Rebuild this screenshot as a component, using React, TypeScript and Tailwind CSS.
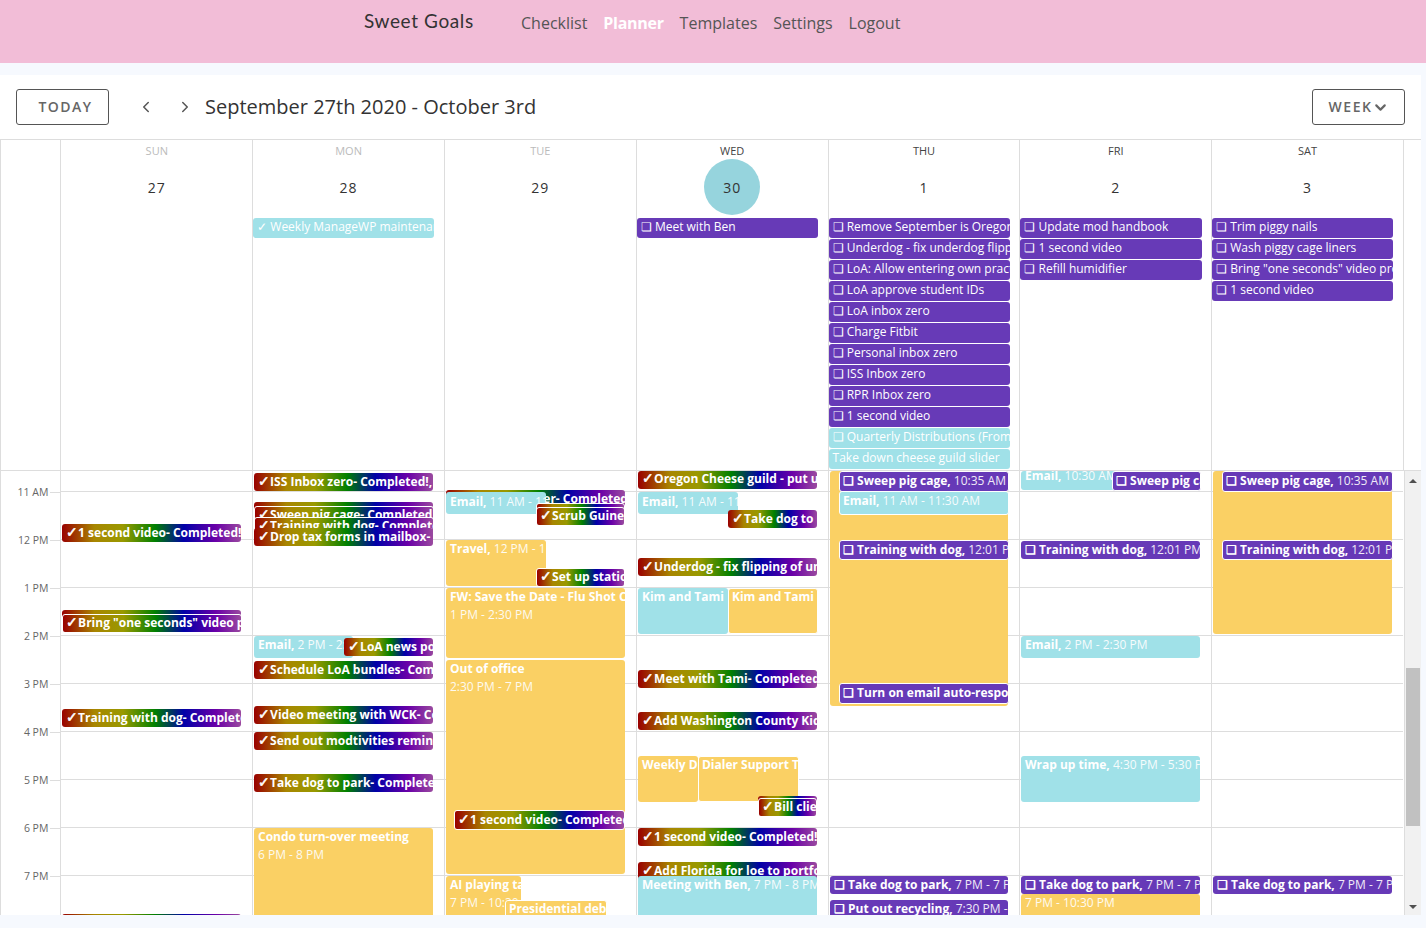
import { ChevronDown, ChevronLeft, ChevronRight } from "lucide-react";

type Kind = "rainbow" | "purple" | "cyan" | "amber";

type CalEvent = {
  day: number;
  x: number;
  y: number;
  w: number;
  h: number;
  kind: Kind;
  title?: string;
  time?: string;
  below?: boolean;
  ring?: boolean;
  lift?: number;
};

const COL_X = 60.4;
const COL_W = 191.8;
const GRID_TOP = 471;

const kindClass: Record<Kind, string> = {
  rainbow:
    "bg-[linear-gradient(to_right,#990000,#a88600_18%,#999900_34%,#008000_52%,#0000a8_68%,#6a00a8_86%,#9a4a9f)]",
  purple: "bg-[#673ab7]",
  cyan: "bg-[#a0e1e8]",
  amber: "bg-[#fad064]",
};

const days = [
  { label: "SUN", date: "27", past: true },
  { label: "MON", date: "28", past: true },
  { label: "TUE", date: "29", past: true },
  { label: "WED", date: "30", today: true },
  { label: "THU", date: "1" },
  { label: "FRI", date: "2" },
  { label: "SAT", date: "3" },
];

const allDay: { text: string; cyan?: boolean }[][] = [
  [],
  [{ text: "✓ Weekly ManageWP maintenance", cyan: true }],
  [],
  [{ text: "❏ Meet with Ben" }],
  [
    { text: "❏ Remove September is Oregon" },
    { text: "❏ Underdog - fix underdog flipping" },
    { text: "❏ LoA: Allow entering own practice" },
    { text: "❏ LoA approve student IDs" },
    { text: "❏ LoA inbox zero" },
    { text: "❏ Charge Fitbit" },
    { text: "❏ Personal inbox zero" },
    { text: "❏ ISS Inbox zero" },
    { text: "❏ RPR Inbox zero" },
    { text: "❏ 1 second video" },
    { text: "❏ Quarterly Distributions (From", cyan: true },
    { text: "Take down cheese guild slider", cyan: true },
  ],
  [
    { text: "❏ Update mod handbook" },
    { text: "❏ 1 second video" },
    { text: "❏ Refill humidifier" },
  ],
  [
    { text: "❏ Trim piggy nails" },
    { text: "❏ Wash piggy cage liners" },
    { text: '❏ Bring "one seconds" video proof' },
    { text: "❏ 1 second video" },
  ],
];

const events: CalEvent[] = [
  // sunday
  { day: 0, x: 62, y: 524, w: 179, h: 18, kind: "rainbow", title: "✓ 1 second video- Completed!" },
  { day: 0, x: 62, y: 610, w: 179, h: 18, kind: "rainbow" },
  { day: 0, x: 62, y: 614, w: 179, h: 18, kind: "rainbow", ring: true, title: '✓ Bring "one seconds" video proof' },
  { day: 0, x: 62, y: 709, w: 179, h: 18, kind: "rainbow", title: "✓ Training with dog- Completed!" },
  { day: 0, x: 62, y: 914, w: 179, h: 18, kind: "rainbow" },
  // monday
  { day: 1, x: 254, y: 473, w: 179, h: 18, kind: "rainbow", title: "✓ ISS Inbox zero- Completed!," },
  { day: 1, x: 254, y: 502, w: 179, h: 18, kind: "rainbow" },
  { day: 1, x: 254, y: 506, w: 179, h: 18, kind: "rainbow", ring: true, title: "✓ Sweep pig cage- Completed!" },
  { day: 1, x: 254, y: 517, w: 179, h: 18, kind: "rainbow", ring: true, title: "✓ Training with dog- Completed!" },
  { day: 1, x: 254, y: 528, w: 179, h: 18, kind: "rainbow", title: "✓ Drop tax forms in mailbox- Completed!" },
  { day: 1, x: 254, y: 636, w: 99, h: 22, kind: "cyan", title: "Email,", time: "2 PM - 2:30 PM" },
  { day: 1, x: 344, y: 638, w: 89, h: 18, kind: "rainbow", title: "✓ LoA news post" },
  { day: 1, x: 254, y: 661, w: 179, h: 18, kind: "rainbow", title: "✓ Schedule LoA bundles- Completed!" },
  { day: 1, x: 254, y: 706, w: 179, h: 18, kind: "rainbow", title: "✓ Video meeting with WCK- Completed!" },
  { day: 1, x: 254, y: 732, w: 179, h: 18, kind: "rainbow", title: "✓ Send out modtivities reminder" },
  { day: 1, x: 254, y: 774, w: 179, h: 18, kind: "rainbow", title: "✓ Take dog to park- Completed!" },
  { day: 1, x: 254, y: 828, w: 179, h: 96, kind: "amber", title: "Condo turn-over meeting", time: "6 PM - 8 PM", below: true },
  // tuesday
  { day: 2, x: 446, y: 490, w: 179, h: 18, kind: "rainbow", title: "✓ Update planner- Completed!" },
  { day: 2, x: 446, y: 492, w: 100, h: 22, kind: "cyan", lift: -1, title: "Email,", time: "11 AM - 11:30 AM" },
  { day: 2, x: 536, y: 503, w: 88, h: 18, kind: "rainbow", ring: true },
  { day: 2, x: 536, y: 507, w: 88, h: 18, kind: "rainbow", ring: true, title: "✓ Scrub Guinea pig" },
  { day: 2, x: 446, y: 540, w: 100, h: 46, kind: "amber", title: "Travel,", time: "12 PM - 1 PM" },
  { day: 2, x: 536, y: 568, w: 88, h: 18, kind: "rainbow", ring: true, title: "✓ Set up station" },
  { day: 2, x: 446, y: 588, w: 179, h: 70, kind: "amber", title: "FW: Save the Date - Flu Shot Clinic", time: "1 PM - 2:30 PM", below: true },
  { day: 2, x: 446, y: 660, w: 179, h: 214, kind: "amber", title: "Out of office", time: "2:30 PM - 7 PM", below: true },
  { day: 2, x: 454, y: 810, w: 170, h: 19, kind: "rainbow", ring: true, lift: 0, title: "✓ 1 second video- Completed!" },
  { day: 2, x: 446, y: 876, w: 75, h: 48, kind: "amber", title: "AI playing tag", time: "7 PM - 10:30 PM", below: true },
  { day: 2, x: 505, y: 900, w: 101, h: 30, kind: "amber", ring: true, title: "Presidential debate" },
  // wednesday
  { day: 3, x: 638, y: 471, w: 179, h: 18, kind: "rainbow", lift: 1, title: "✓ Oregon Cheese guild - put up" },
  { day: 3, x: 638, y: 492, w: 100, h: 22, kind: "cyan", lift: -1, title: "Email,", time: "11 AM - 11:30 AM" },
  { day: 3, x: 728, y: 510, w: 89, h: 18, kind: "rainbow", title: "✓ Take dog to park" },
  { day: 3, x: 638, y: 558, w: 179, h: 18, kind: "rainbow", title: "✓ Underdog - fix flipping of underdog" },
  { day: 3, x: 638, y: 588, w: 90, h: 46, kind: "cyan", title: "Kim and Tami" },
  { day: 3, x: 728, y: 588, w: 89, h: 45, kind: "amber", ring: true, title: "Kim and Tami" },
  { day: 3, x: 638, y: 670, w: 179, h: 18, kind: "rainbow", title: "✓ Meet with Tami- Completed!" },
  { day: 3, x: 638, y: 712, w: 179, h: 18, kind: "rainbow", title: "✓ Add Washington County Kids" },
  { day: 3, x: 638, y: 756, w: 60, h: 46, kind: "amber", title: "Weekly Dialer" },
  { day: 3, x: 698, y: 756, w: 100, h: 45, kind: "amber", ring: true, title: "Dialer Support Team" },
  { day: 3, x: 758, y: 796, w: 59, h: 18, kind: "rainbow" },
  { day: 3, x: 758, y: 798, w: 58, h: 18, kind: "rainbow", ring: true, title: "✓ Bill client" },
  { day: 3, x: 638, y: 828, w: 179, h: 18, kind: "rainbow", title: "✓ 1 second video- Completed!" },
  { day: 3, x: 638, y: 862, w: 179, h: 18, kind: "rainbow", title: "✓ Add Florida for loe to portfolio" },
  { day: 3, x: 638, y: 876, w: 179, h: 48, kind: "cyan", title: "Meeting with Ben,", time: "7 PM - 8 PM" },
  // thursday
  { day: 4, x: 830, y: 471, w: 178, h: 235, kind: "amber" },
  { day: 4, x: 839, y: 471, w: 169, h: 20, kind: "purple", ring: true, lift: 0, title: "❏ Sweep pig cage,", time: "10:35 AM" },
  { day: 4, x: 839, y: 491, w: 169, h: 23, kind: "cyan", ring: true, lift: 0, title: "Email,", time: "11 AM - 11:30 AM" },
  { day: 4, x: 839, y: 540, w: 169, h: 19, kind: "purple", ring: true, lift: 0, title: "❏ Training with dog,", time: "12:01 PM" },
  { day: 4, x: 839, y: 683, w: 169, h: 20, kind: "purple", ring: true, lift: 0, title: "❏ Turn on email auto-responder" },
  { day: 4, x: 830, y: 876, w: 178, h: 18, kind: "purple", title: "❏ Take dog to park,", time: "7 PM - 7 PM" },
  { day: 4, x: 830, y: 900, w: 178, h: 18, kind: "purple", title: "❏ Put out recycling,", time: "7:30 PM - 8 PM" },
  // friday
  { day: 5, x: 1021, y: 471, w: 100, h: 19, kind: "cyan", lift: 4, title: "Email,", time: "10:30 AM" },
  { day: 5, x: 1112, y: 471, w: 88, h: 19, kind: "purple", ring: true, lift: 0, title: "❏ Sweep pig cage" },
  { day: 5, x: 1021, y: 541, w: 179, h: 18, kind: "purple", title: "❏ Training with dog,", time: "12:01 PM" },
  { day: 5, x: 1021, y: 636, w: 179, h: 22, kind: "cyan", title: "Email,", time: "2 PM - 2:30 PM" },
  { day: 5, x: 1021, y: 756, w: 179, h: 46, kind: "cyan", title: "Wrap up time,", time: "4:30 PM - 5:30 PM" },
  { day: 5, x: 1021, y: 894, w: 179, h: 30, kind: "amber", time: "7 PM - 10:30 PM" },
  { day: 5, x: 1021, y: 876, w: 179, h: 18, kind: "purple", title: "❏ Take dog to park,", time: "7 PM - 7 PM" },
  // saturday
  { day: 6, x: 1213, y: 471, w: 179, h: 163, kind: "amber" },
  { day: 6, x: 1222, y: 471, w: 170, h: 20, kind: "purple", ring: true, lift: 0, title: "❏ Sweep pig cage,", time: "10:35 AM" },
  { day: 6, x: 1222, y: 540, w: 170, h: 19, kind: "purple", ring: true, lift: 0, title: "❏ Training with dog,", time: "12:01 PM" },
  { day: 6, x: 1213, y: 876, w: 179, h: 18, kind: "purple", title: "❏ Take dog to park,", time: "7 PM - 7 PM" },
];

const hours = ["11 AM", "12 PM", "1 PM", "2 PM", "3 PM", "4 PM", "5 PM", "6 PM", "7 PM"];

function Title({ text }: { text: string }) {
  if (!text.startsWith("✓")) return <span className="font-bold">{text}</span>;
  return (
    <span className="font-bold">
      <span className="mr-[-1px] inline-block w-[10px] font-['DejaVu_Sans',sans-serif] text-sm leading-none [-webkit-text-stroke:0.5px_white]">
        ✓
      </span>
      {text.slice(1)}
    </span>
  );
}

function EventChip({ ev }: { ev: CalEvent }) {
  const colStart = COL_X + COL_W * ev.day + 1;
  const extra = ev.ring ? 1 : 0;
  const lift = ev.lift ?? extra;
  return (
    <div
      className={`absolute overflow-hidden rounded-[3px] px-1 text-xs leading-[17px] whitespace-nowrap text-white ${kindClass[ev.kind]} ${
        ev.ring ? "border border-white" : ""
      }`}
      style={{
        left: ev.x - colStart,
        top: ev.y - GRID_TOP,
        width: ev.w + extra,
        height: ev.h + extra,
      }}
    >
      <div className={ev.ring ? "-ml-px" : ""} style={{ marginTop: -lift }}>
        {ev.title && <Title text={ev.title} />}
        {ev.time && !ev.below && <span className="opacity-90"> {ev.time}</span>}
        {ev.time && ev.below && <div className="mt-px opacity-90">{ev.time}</div>}
      </div>
    </div>
  );
}

export default function App() {
  return (
    <div className="h-[928px] overflow-hidden bg-[#f6f9fe] font-['Open_Sans',sans-serif]">
      <nav className="flex h-[63px] items-start bg-[#f2bdd7] pl-[364px] pt-[7px]">
        <span className="mr-[48px] w-[109px] font-['Lato',sans-serif] text-[19px] leading-[28px] tracking-[0.6px] whitespace-nowrap text-[#333]">
          Sweet Goals
        </span>
        <div className="flex gap-4 pt-[2px] text-base leading-[28px] text-[#555]">
          <a>Checklist</a>
          <a className="font-bold tracking-[-0.3px] text-white">Planner</a>
          <a>Templates</a>
          <a>Settings</a>
          <a>Logout</a>
        </div>
      </nav>

      <main className="mt-3 h-[840px] w-[1421px] bg-white">
        <div className="flex h-[65px] items-center border-b border-[#ddd] pl-4 pr-4">
          <button className="h-9 w-[93px] rounded-[3px] border border-[#555] pl-[6px] text-sm font-semibold tracking-[1.5px] text-[#666]">
            TODAY
          </button>
          <button className="ml-[17px] flex w-[39px] justify-center text-[#555]">
            <ChevronLeft size={18} />
          </button>
          <button className="flex w-[39px] justify-center text-[#555]">
            <ChevronRight size={18} />
          </button>
          <h2 className="pl-px text-[20px] leading-7 text-[#333]">September 27th 2020 - October 3rd</h2>
          <button className="ml-auto flex h-9 w-[93px] items-center justify-center rounded-[3px] border border-[#555] pl-px text-sm font-semibold tracking-[1.5px] text-[#666]">
            WEEK
            <ChevronDown size={17} strokeWidth={3} />
          </button>
        </div>

        <div className="grid h-[331px] grid-cols-[60.4px_repeat(7,191.8px)_1fr] border-b border-[#ddd]">
          <div className="border-l border-[#ddd]" />
          {days.map((d, i) => (
            <div key={d.label} className="flex flex-col border-l border-[#ddd]">
              <div className={`pt-1 text-center text-[11px] leading-[14px] ${d.past ? "text-[#bbb]" : "text-[#444]"}`}>
                {d.label}
              </div>
              <div className="mt-px flex justify-center">
                <div
                  className={`flex h-14 w-14 items-center justify-center rounded-full pt-[2px] text-sm tracking-[1px] text-[#333] ${
                    d.today ? "bg-[#96d4dd]" : ""
                  }`}
                >
                  {d.date}
                </div>
              </div>
              <div className="mt-[3px] flex flex-col gap-px pr-[9.5px]">
                {allDay[i].map((item) => (
                  <div
                    key={item.text}
                    className={`h-5 overflow-hidden rounded-[3px] px-1 text-xs leading-[17px] whitespace-nowrap text-white ${
                      item.cyan ? "bg-[#a0e1e8]" : "bg-[#673ab7]"
                    }`}
                  >
                    {item.text}
                  </div>
                ))}
              </div>
            </div>
          ))}
          <div className="border-l border-[#ddd]" />
        </div>

        <div className="flex h-[444px]">
          <div className="grid h-full w-[1404px] grid-cols-[60.4px_repeat(7,191.8px)] overflow-hidden">
            <div className="border-l border-[#ddd]">
              <div className="h-[21px]" />
              {hours.map((h) => (
                <div key={h} className="-mt-px flex h-[49px] -translate-y-[23px] items-center justify-end gap-[2px] text-[10.5px] text-[#666]">
                  <span>{h}</span>
                  <span className="h-px w-[10px] bg-[#ddd]" />
                </div>
              ))}
            </div>
            {days.map((d, i) => (
              <div key={d.label} className="relative border-l border-[#ddd]">
                <div className="h-[21px] border-b border-[#ddd]" />
                {hours.map((h) => (
                  <div key={h} className="h-12 border-b border-[#ddd]" />
                ))}
                {events
                  .filter((ev) => ev.day === i)
                  .map((ev, n) => (
                    <EventChip key={n} ev={ev} />
                  ))}
              </div>
            ))}
          </div>

          <div className="flex w-[17px] flex-col border-l border-[#ddd] bg-[#f1f1f1]">
            <div className="flex h-[17px] items-center justify-center pt-[2px]">
              <div className="h-0 w-0 border-x-[4px] border-b-[4px] border-x-transparent border-b-[#505050]" />
            </div>
            <div className="mx-[1px] mt-[180px] h-[158px] bg-[#c1c1c1]" />
            <div className="mt-auto flex h-[17px] items-center justify-center">
              <div className="h-0 w-0 border-x-[4px] border-t-[4px] border-x-transparent border-t-[#505050]" />
            </div>
          </div>
        </div>
      </main>
    </div>
  );
}
